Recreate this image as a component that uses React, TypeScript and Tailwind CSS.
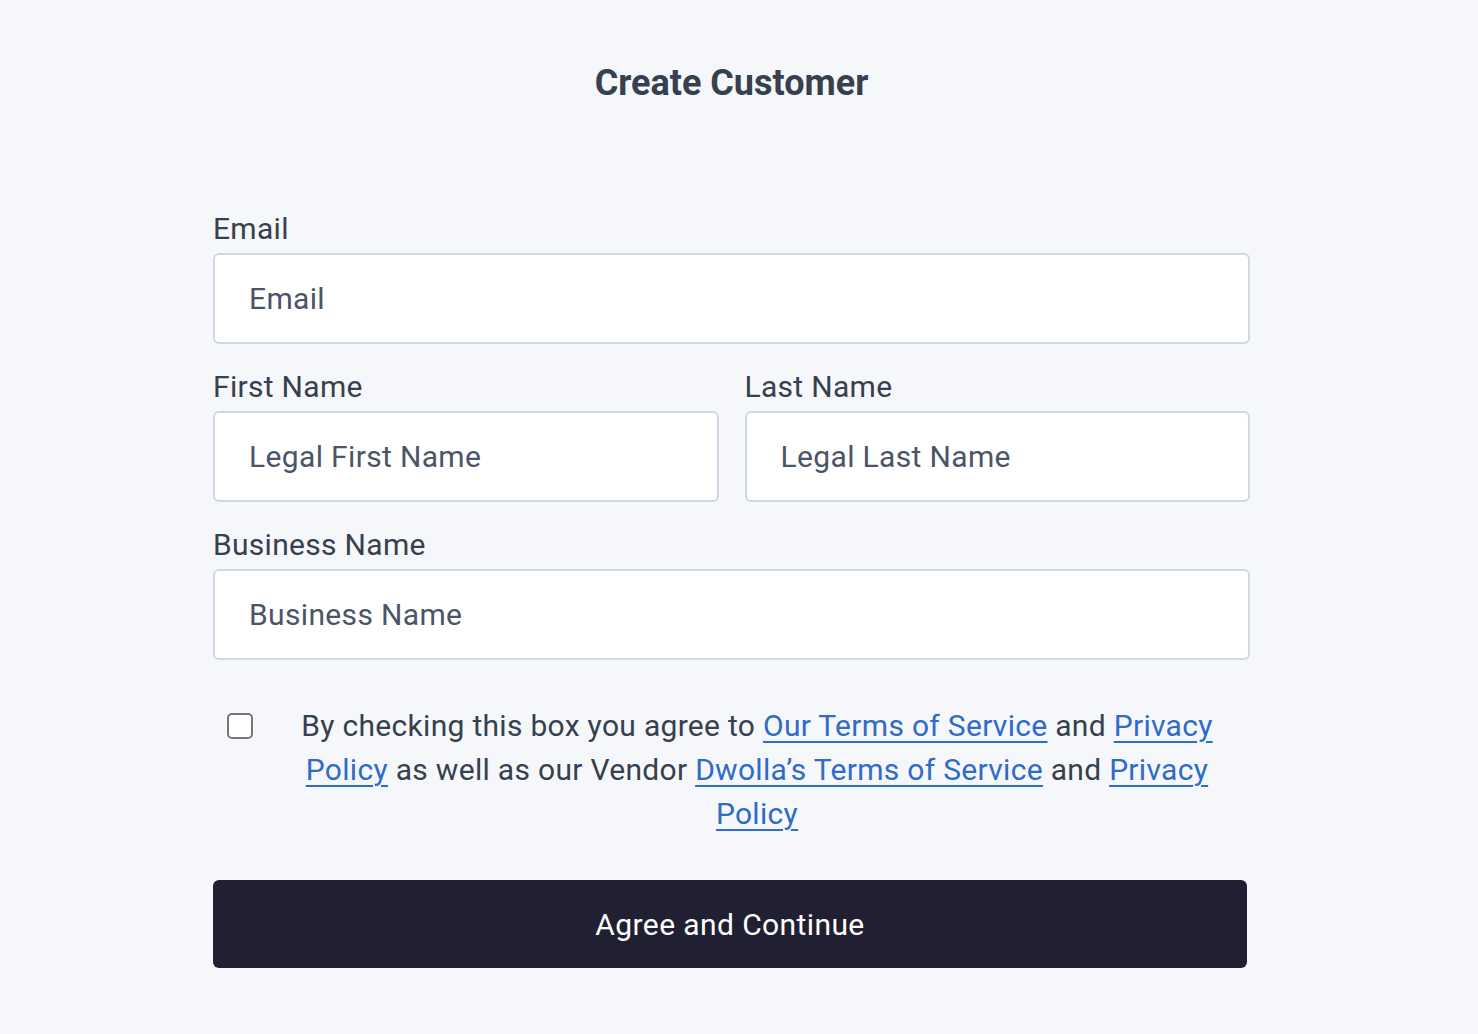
import React from 'react';

function Field({ label, placeholder }: { label: string; placeholder: string }) {
  return (
    <div className="flex flex-col">
      <label className="text-[30px] leading-[36px] tracking-[0.3px] text-[#36404f]">{label}</label>
      <input
        type="text"
        placeholder={placeholder}
        className="mt-[6px] h-[91px] w-full rounded-[6px] border-2 border-[#cfd8e3] bg-white px-[34px] text-[30px] tracking-[0.35px] text-[#36404f] placeholder:text-[#4a5568] outline-none"
      />
    </div>
  );
}

export default function App() {
  const link = 'text-[#2f6bc8] underline underline-offset-[5px] decoration-2';

  return (
    <div className="min-h-screen bg-[#f5f7fa] font-['Roboto',sans-serif] pr-[15px]">
      <div className="mx-auto flex w-[1037px] flex-col pt-[61px] pb-[66px]">
        <h1 className="text-center text-[36px] leading-[44px] font-bold text-[#36404f]">Create Customer</h1>

        <div className="mt-[106px] flex flex-col gap-[25px]">
          <Field label="Email" placeholder="Email" />
          <div className="grid grid-cols-2 gap-[26px]">
            <Field label="First Name" placeholder="Legal First Name" />
            <Field label="Last Name" placeholder="Legal Last Name" />
          </div>
          <Field label="Business Name" placeholder="Business Name" />
        </div>

        <div className="mt-[44px] flex items-start">
          <input
            type="checkbox"
            className="ml-[14px] mt-[9px] h-[26px] w-[26px] shrink-0 appearance-none rounded-[5px] border-2 border-[#767676] bg-white"
          />
          <p className="ml-[42px] w-[924px] text-center text-[30px] leading-[44px] tracking-[0.3px] text-[#36404f]">
            By checking this box you agree to <a href="#" className={link}>Our Terms of Service</a> and{' '}
            <a href="#" className={link}>Privacy Policy</a> as well as our Vendor{' '}
            <a href="#" className={link}>Dwolla’s Terms of Service</a> and{' '}
            <a href="#" className={link}>Privacy Policy</a>
          </p>
        </div>

        <button
          type="button"
          className="mt-[44px] h-[88px] w-[1034px] rounded-[6px] bg-[#212033] text-[30px] tracking-[0.4px] text-white"
        >
          Agree and Continue
        </button>
      </div>
    </div>
  );
}
